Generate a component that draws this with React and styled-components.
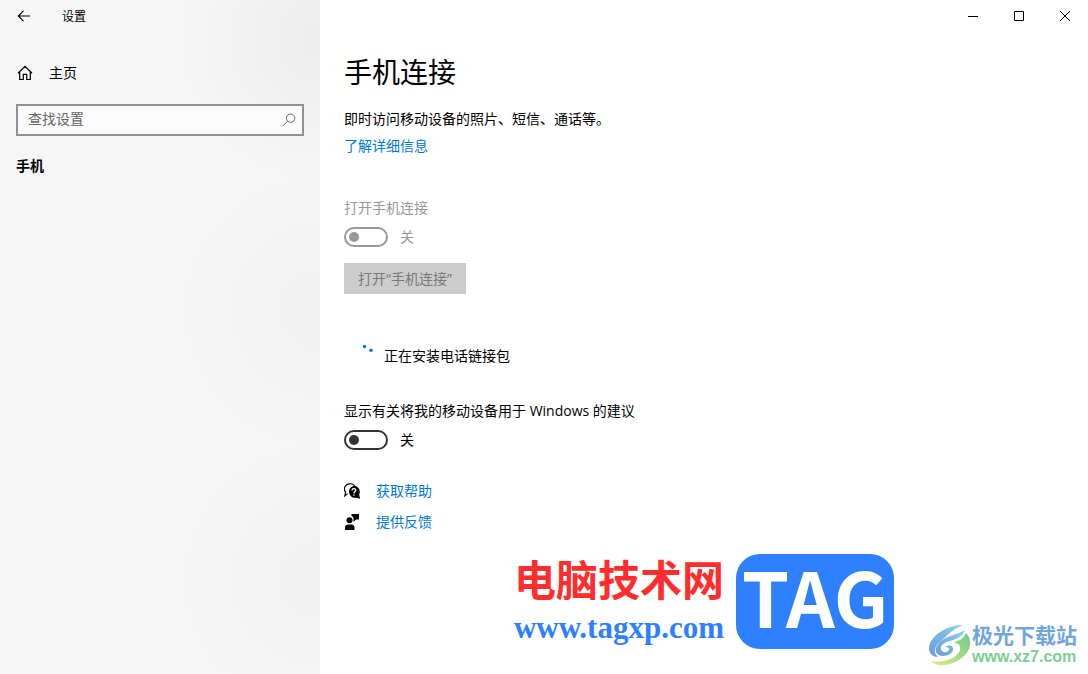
import React, { useState } from "react";
//STYLE
import styled, { createGlobalStyle } from "styled-components";

const App = () => {
  const [search, setSearch] = useState("");
  const [suggestions, setSuggestions] = useState(false);

  return (
    <Window>
      <GlobalStyle />
      <Sidebar>
        <TitleBar>
          <BackButton aria-label="返回">
            <svg width="14" height="14" viewBox="0 0 14 14">
              <path d="M13 7H1.500M6.500 1.800L1.300 7l5.200 5.200" />
            </svg>
          </BackButton>
          <AppName>设置</AppName>
        </TitleBar>
        <HomeLink href="#home">
          <svg width="16" height="16" viewBox="0 0 16 16">
            <path d="M1 8.200L8 1.400l7 6.800M2.700 6.800v7.700h3.600V9.300h3.400v5.200h3.600V6.800" />
          </svg>
          主页
        </HomeLink>
        <SearchBox>
          <input
            type="text"
            placeholder="查找设置"
            aria-label="查找设置"
            value={search}
            onChange={(e) => setSearch(e.target.value)}
          />
          <svg width="14" height="14" viewBox="0 0 14 14">
            <circle cx="8.600" cy="5.200" r="4.200" />
            <path d="M5.600 8.200L1 12.800" />
          </svg>
        </SearchBox>
        <Category>手机</Category>
      </Sidebar>
      <Main>
        <WindowControls>
          <ControlButton aria-label="最小化">
            <svg width="12" height="12" viewBox="0 0 12 12">
              <path d="M1 6.500h10" />
            </svg>
          </ControlButton>
          <ControlButton aria-label="最大化">
            <svg width="12" height="12" viewBox="0 0 12 12">
              <path d="M1.500 1.500h9v9h-9z" />
            </svg>
          </ControlButton>
          <ControlButton aria-label="关闭">
            <svg width="12" height="12" viewBox="0 0 12 12">
              <path d="M1 1l10 10M11 1L1 11" />
            </svg>
          </ControlButton>
        </WindowControls>
        <Content>
          <Title>手机连接</Title>
          <Text>即时访问移动设备的照片、短信、通话等。</Text>
          <Link href="#more">了解详细信息</Link>

          <Setting>
            <SettingLabel htmlFor="phone" $disabled>
              打开手机连接
            </SettingLabel>
            <ToggleRow $disabled>
              <Toggle id="phone" type="checkbox" disabled />
              <span>关</span>
            </ToggleRow>
            <OpenButton disabled>打开“手机连接”</OpenButton>
          </Setting>

          <Progress role="status">
            <svg width="24" height="24" viewBox="0 0 24 24">
              <circle cx="12.500" cy="2.500" r="1.700" />
              <circle cx="19" cy="6.200" r="1.700" />
            </svg>
            <Text>正在安装电话链接包</Text>
          </Progress>

          <Suggestion>
            <SettingLabel htmlFor="suggestions">
              显示有关将我的移动设备用于 Windows 的建议
            </SettingLabel>
            <ToggleRow>
              <Toggle
                id="suggestions"
                type="checkbox"
                checked={suggestions}
                onChange={() => setSuggestions(!suggestions)}
              />
              <span>{suggestions ? "开" : "关"}</span>
            </ToggleRow>
          </Suggestion>

          <HelpLinks>
            <HelpRow>
              <HelpIcon />
              <Link href="#help">获取帮助</Link>
            </HelpRow>
            <HelpRow>
              <FeedbackIcon />
              <Link href="#feedback">提供反馈</Link>
            </HelpRow>
          </HelpLinks>
        </Content>
      </Main>

      <TagMark>
        <TagText>
          <TagName>电脑技术网</TagName>
          <TagUrl>www.tagxp.com</TagUrl>
        </TagText>
        <TagBadge>TAG</TagBadge>
      </TagMark>
      <SiteMark>
        <SwirlIcon />
        <div>
          <SiteName>极光下载站</SiteName>
          <SiteUrl>www.xz7.com</SiteUrl>
        </div>
      </SiteMark>
    </Window>
  );
};

const HelpIcon = () => (
  <svg width="16" height="16" viewBox="0 0 16 16">
    <path
      d="M3.600 10.600L.8 12.800l.8-3.600A5.200 5.200 0 0 1 6 .8a5.400 5.400 0 0 1 4.600 1.800"
      fill="none"
      stroke="#000"
      strokeWidth="1.200"
    />
    <path d="M9.800 2.800a6 6 0 0 1 5.400 8.600l.8 4.400-3.600-1.100A6 6 0 1 1 9.800 2.800z" />
    <path
      d="M8 7.400c0-2.300 3.700-2.200 3.700-.1 0 1.500-1.800 1.500-1.800 3.100M9.900 11.400v1.400"
      fill="none"
      stroke="#fff"
      strokeWidth="1.300"
    />
  </svg>
);

const FeedbackIcon = () => (
  <svg width="16" height="16" viewBox="0 0 16 16">
    <circle cx="5.500" cy="6.300" r="3" />
    <path d="M1 16v-2.200A3.300 3.300 0 0 1 4.300 10.500h2.900a3.300 3.300 0 0 1 3.300 3.300V16z" />
    <path d="M7.500 0H15v5.500h-3L9.500 8V5.500c0-2-.5-2.800-2-3.400z" />
  </svg>
);

const SwirlIcon = () => (
  <svg width="44" height="42" viewBox="0 0 44 42">
    <defs>
      <linearGradient id="sky" x1="0" y1="1" x2="1" y2="0">
        <stop offset="0" stopColor="#6b9bdc" />
        <stop offset="1" stopColor="#86d3ee" />
      </linearGradient>
      <linearGradient id="leaf" x1="0" y1="1" x2="1" y2="0">
        <stop offset="0" stopColor="#e3ea80" />
        <stop offset="1" stopColor="#6ccb8a" />
      </linearGradient>
    </defs>
    <path
      fill="url(#sky)"
      d="M35 1C20 1 2 11 1 24c0 6 4 9 9 9-5-4-4-11 3-16C19 12 24 5 35 1z"
    />
    <path
      fill="url(#sky)"
      d="M37 6C29 11 16 12 10 20c-5 7-1 12 5 12 6 0 11-4 10-8-1-3-5-3-8-1 3 0 5 1 4 3-2 3-7 3-8-1-1-4 4-7 9-8 7-2 13-5 15-11z"
    />
    <path
      fill="url(#leaf)"
      d="M38 9c-2 6-8 8-14 10 5-1 9 2 8 7-2 6-9 10-17 11-4 1-8 1-12 0 5 6 18 5 26 0 9-5 14-12 13-19 0-4-2-7-4-9z"
    />
  </svg>
);

const GlobalStyle = createGlobalStyle`
  * {
    box-sizing: border-box;
  }
  body {
    margin: 0;
    background: #fff;
    color: #000;
    font-family: "Open Sans", "Noto Sans CJK SC", sans-serif;
    font-size: 14px;
    line-height: 20px;
  }
  button,
  input {
    font: inherit;
  }
`;
const Window = styled.div`
  position: relative;
  display: flex;
  min-height: 100vh;
  overflow: hidden;
`;
const Sidebar = styled.aside`
  display: flex;
  flex-direction: column;
  flex: 0 0 320px;
  background: radial-gradient(
      circle at 100% 6%,
      rgba(222, 222, 222, 0.4),
      transparent 140px
    ),
    radial-gradient(
      circle at 100% 46%,
      rgba(228, 230, 230, 0.3),
      transparent 140px
    ),
    radial-gradient(
      circle at 100% 86%,
      rgba(228, 230, 231, 0.3),
      transparent 140px
    ),
    #f6f6f6;
`;
const TitleBar = styled.header`
  display: flex;
  align-items: center;
  height: 32px;
`;
const BackButton = styled.button`
  display: flex;
  align-items: center;
  justify-content: center;
  width: 48px;
  height: 32px;
  padding: 0;
  border: none;
  background: transparent;
  svg {
    fill: none;
    stroke: #000;
    stroke-width: 1.1;
  }
`;
const AppName = styled.span`
  padding: 2px 0 0 14px;
  font-size: 12px;
`;
const HomeLink = styled.a`
  display: flex;
  align-items: center;
  gap: 16px;
  height: 40px;
  margin-top: 21px;
  padding: 0 17px;
  color: #000;
  text-decoration: none;
  svg {
    fill: none;
    stroke: #000;
    stroke-width: 1.2;
  }
`;
const SearchBox = styled.div`
  display: flex;
  align-items: center;
  height: 32px;
  margin: 11px 16px 0;
  padding: 0 6px 0 10px;
  border: 2px solid #919191;
  background: #fbfbfb;
  input {
    flex: 1;
    min-width: 0;
    padding: 0 0 2px;
    border: none;
    outline: none;
    background: transparent;
  }
  input::placeholder {
    color: #666;
    opacity: 1;
  }
  svg {
    fill: none;
    stroke: #666;
  }
`;
const Category = styled.h2`
  margin: 20px 16px;
  font-size: 14px;
  line-height: 20px;
  font-weight: 700;
`;
const Main = styled.main`
  flex: 1;
  min-width: 0;
`;
const WindowControls = styled.div`
  display: flex;
  justify-content: flex-end;
`;
const ControlButton = styled.button`
  display: flex;
  align-items: center;
  justify-content: center;
  width: 46px;
  height: 32px;
  padding: 0;
  border: none;
  background: transparent;
  svg {
    fill: none;
    stroke: #000;
  }
`;
const Content = styled.div`
  display: flex;
  flex-direction: column;
  align-items: flex-start;
  padding: 20px 24px;
`;
const Title = styled.h1`
  margin: 0 0 17px;
  font-size: 28px;
  line-height: 40px;
  font-weight: 400;
`;
const Text = styled.p`
  margin: 0;
`;
const Link = styled.a`
  color: #0078d7;
  text-decoration: none;
  ${Text} + & {
    margin-top: 7px;
  }
`;
const Setting = styled.section`
  display: flex;
  flex-direction: column;
  align-items: flex-start;
  margin-top: 42px;
`;
const Suggestion = styled(Setting)`
  margin-top: 33px;
`;
const SettingLabel = styled.label`
  color: ${(props) => (props.$disabled ? "#999" : "#000")};
`;
const ToggleRow = styled.div`
  display: flex;
  align-items: center;
  gap: 12px;
  margin-top: 9px;
  color: ${(props) => (props.$disabled ? "#999" : "#000")};
`;
const Toggle = styled.input`
  appearance: none;
  display: flex;
  align-items: center;
  width: 44px;
  height: 20px;
  margin: 0;
  padding: 0 3px;
  border: 2px solid #333;
  border-radius: 10px;
  &::before {
    content: "";
    width: 10px;
    height: 10px;
    border-radius: 50%;
    background: #333;
  }
  &:checked {
    justify-content: flex-end;
  }
  &:disabled {
    border-color: #999;
  }
  &:disabled::before {
    background: #999;
  }
`;
const OpenButton = styled.button`
  height: 31px;
  margin-top: 16px;
  padding: 0 14px;
  border: none;
  background: #ccc;
  color: #7a7a7a;
`;
const Progress = styled.div`
  display: flex;
  align-items: center;
  gap: 8px;
  margin-top: 50px;
  padding-left: 8px;
  svg {
    fill: #0078d7;
  }
`;
const HelpLinks = styled.nav`
  display: flex;
  flex-direction: column;
  gap: 11px;
  margin-top: 31px;
`;
const HelpRow = styled.div`
  display: flex;
  align-items: center;
  gap: 16px;
`;
const TagMark = styled.div`
  position: absolute;
  right: 194px;
  bottom: 25px;
  display: flex;
  align-items: center;
  gap: 12px;
`;
const TagText = styled.div`
  display: flex;
  flex-direction: column;
  align-items: center;
  gap: 4px;
`;
const TagName = styled.span`
  color: #ff2d2d;
  font-size: 42px;
  line-height: 48px;
  font-weight: 700;
`;
const TagUrl = styled.span`
  color: #2e80ff;
  font-family: "Liberation Serif", serif;
  font-size: 31px;
  line-height: 40px;
  font-weight: 700;
`;
const TagBadge = styled.div`
  display: flex;
  align-items: center;
  justify-content: center;
  width: 158px;
  height: 95px;
  padding-bottom: 12px;
  border-radius: 24px;
  background: #2e80ff;
  color: #fff;
  font-family: "Noto Sans CJK SC", sans-serif;
  font-size: 76px;
  line-height: 83px;
  font-weight: 700;
`;
const SiteMark = styled.div`
  position: absolute;
  right: 11px;
  bottom: 7px;
  display: flex;
  align-items: center;
`;
const SiteName = styled.div`
  color: #6fa6de;
  font-size: 21px;
  line-height: 24px;
  font-weight: 700;
`;
const SiteUrl = styled.div`
  color: #7ccf94;
  font-family: "Liberation Sans", sans-serif;
  font-size: 16px;
  line-height: 20px;
  font-weight: 700;
`;
export default App;
